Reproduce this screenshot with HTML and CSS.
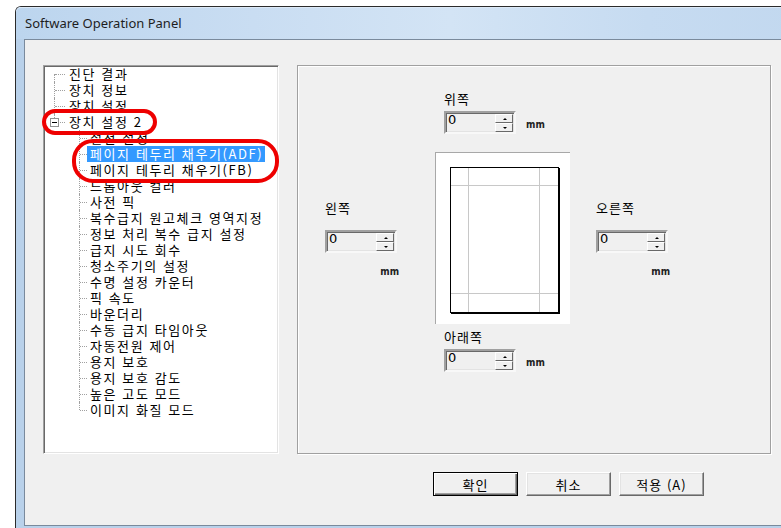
FILE: index.html
```html
<!DOCTYPE html>
<html lang="ko">
<head>
<meta charset="utf-8">
<title>Software Operation Panel</title>
<link rel="stylesheet" href="styles.css">
</head>
<body>
<div class="window">
  <div class="titlebar"><span class="title">Software Operation Panel</span></div>
  <div class="frame">
    <div class="client">
      <div class="content">
        <div class="tree">
          <ul class="rows">
            <li class="row root first"><span class="label">진단 결과</span></li>
            <li class="row root"><span class="label">장치 정보</span></li>
            <li class="row root"><span class="label">장치 설정</span></li>
            <li class="row root last"><span class="toggle"></span><span class="label">장치 설정 2</span></li>
            <li class="row child"><span class="label">절전 설정</span></li>
            <li class="row child"><span class="label selected">페이지 테두리 채우기(ADF)</span></li>
            <li class="row child"><span class="label">페이지 테두리 채우기(FB)</span></li>
            <li class="row child"><span class="label">드롭아웃 컬러</span></li>
            <li class="row child"><span class="label">사전 픽</span></li>
            <li class="row child"><span class="label">복수급지 원고체크 영역지정</span></li>
            <li class="row child"><span class="label">정보 처리 복수 급지 설정</span></li>
            <li class="row child"><span class="label">급지 시도 회수</span></li>
            <li class="row child"><span class="label">청소주기의 설정</span></li>
            <li class="row child"><span class="label">수명 설정 카운터</span></li>
            <li class="row child"><span class="label">픽 속도</span></li>
            <li class="row child"><span class="label">바운더리</span></li>
            <li class="row child"><span class="label">수동 급지 타임아웃</span></li>
            <li class="row child"><span class="label">자동전원 제어</span></li>
            <li class="row child"><span class="label">용지 보호</span></li>
            <li class="row child"><span class="label">용지 보호 감도</span></li>
            <li class="row child"><span class="label">높은 고도 모드</span></li>
            <li class="row child last"><span class="label">이미지 화질 모드</span></li>
          </ul>
          <div class="oval oval-a"></div>
          <div class="oval oval-b"></div>
        </div>

        <div class="panel">
          <div class="edge-top">
            <div class="field-label">위쪽</div>
            <div class="field-row">
              <div class="spin"><span class="spin-value">0</span><span class="spin-btns"><span class="spin-btn up"></span><span class="spin-btn down"></span></span></div>
              <span class="unit">mm</span>
            </div>
          </div>

          <div class="middle">
            <div class="side side-left">
              <div class="field-label">왼쪽</div>
              <div class="spin spin-side"><span class="spin-value">0</span><span class="spin-btns"><span class="spin-btn up"></span><span class="spin-btn down"></span></span></div>
              <div class="unit unit-below">mm</div>
            </div>
            <div class="paper">
              <div class="sheet">
                <span class="guide v g1"></span>
                <span class="guide v g2"></span>
                <span class="guide h g3"></span>
                <span class="guide h g4"></span>
              </div>
            </div>
            <div class="side side-right">
              <div class="field-label">오른쪽</div>
              <div class="spin spin-side"><span class="spin-value">0</span><span class="spin-btns"><span class="spin-btn up"></span><span class="spin-btn down"></span></span></div>
              <div class="unit unit-below">mm</div>
            </div>
          </div>

          <div class="edge-bottom">
            <div class="field-label">아래쪽</div>
            <div class="field-row">
              <div class="spin"><span class="spin-value">0</span><span class="spin-btns"><span class="spin-btn up"></span><span class="spin-btn down"></span></span></div>
              <span class="unit">mm</span>
            </div>
          </div>
        </div>
      </div>

      <div class="buttons">
        <button class="btn default">확인</button>
        <button class="btn">취소</button>
        <button class="btn">적용 (A)</button>
      </div>
    </div>
  </div>
</div>
</body>
</html>
```

FILE: styles.css
```css
html, body {
  margin: 0;
  padding: 0;
}
body {
  width: 781px;
  height: 528px;
  overflow: hidden;
  background: #ffffff;
  font-family: "Noto Sans CJK KR", "Noto Sans", sans-serif;
  color: #000;
}

.window {
  margin: 6px 0 0 15px;
  width: 790px;
  height: 540px;
  border-top: 1px solid #2b2b2b;
  border-left: 1px solid #2b2b2b;
  border-top-left-radius: 6px;
  background: #b9d1ea;
  display: flex;
  flex-direction: column;
}

.titlebar {
  height: 32px;
  flex: none;
  display: flex;
  align-items: center;
  padding-left: 9px;
  border-top-left-radius: 5px;
  background: linear-gradient(90deg, #bcd5ee 0%, #c9ddf2 30%, #d3e4f5 55%, #c6dbf1 80%, #c2d8ef 100%);
  box-shadow: inset 0 1px 0 #dce9f7;
}
.title {
  font-family: "Noto Sans", "Open Sans", sans-serif;
  font-size: 13px;
  line-height: 16px;
  color: #1e1e1e;
  margin-top: -1px;
}

.frame {
  padding-left: 8px;
  flex: none;
}

.client {
  width: 770px;
  height: 485px;
  border: 1px solid #7a8a9c;
  background: #f0f0f0;
}

.content {
  display: flex;
  padding: 25px 0 0 18px;
}

/* ---------- tree ---------- */
.tree {
  position: relative;
  width: 234px;
  height: 387px;
  border: 1px solid;
  border-color: #a0a0a0 #ffffff #ffffff #a0a0a0;
  box-shadow: inset 1px 1px 0 #696969, inset -1px -1px 0 #e3e3e3;
  background: #ffffff;
  font-size: 13px;
  letter-spacing: 1.6px;
}
.rows {
  list-style: none;
  margin: 0;
  padding: 0;
}
.row {
  position: relative;
  height: 16px;
  line-height: 16px;
  white-space: nowrap;
}
.label {
  display: inline-block;
  height: 16px;
  padding: 0 2px 0 3px;
}
.root .label {
  margin-left: 22px;
}
.child .label {
  margin-left: 43px;
}
.label.selected {
  background: #3399ff;
  color: #ffffff;
}

/* tree connector lines */
.row::before,
.row::after {
  content: "";
  position: absolute;
}
.root::before {
  left: 10px;
  top: 0;
  height: 16px;
  border-left: 1px dotted #a0a0a0;
}
.root.first::before {
  top: 8px;
  height: 8px;
}
.root.last::before {
  height: 8px;
}
.root::after {
  left: 11px;
  top: 8px;
  width: 10px;
  border-top: 1px dotted #a0a0a0;
}
.child::before {
  left: 35px;
  top: 0;
  height: 16px;
  border-left: 1px dotted #a0a0a0;
}
.child.last::before {
  height: 8px;
}
.child::after {
  left: 36px;
  top: 8px;
  width: 7px;
  border-top: 1px dotted #a0a0a0;
}
.toggle {
  position: absolute;
  z-index: 1;
  left: 6px;
  top: 4px;
  width: 7px;
  height: 7px;
  border: 1px solid #919191;
  background: #ffffff;
}
.toggle::after {
  content: "";
  position: absolute;
  left: 1px;
  top: 3px;
  width: 5px;
  height: 1px;
  background: #000000;
}

/* red annotation ovals */
.oval {
  position: absolute;
  border: 4px solid #ee0000;
  box-sizing: border-box;
}
.oval-a {
  left: -2px;
  top: 43px;
  width: 115px;
  height: 26px;
  border-radius: 13px;
}
.oval-b {
  left: 28px;
  top: 73px;
  width: 207px;
  height: 44px;
  border-radius: 21px;
}

/* ---------- right panel ---------- */
.panel {
  margin-left: 18px;
  width: 472px;
  height: 387px;
  border: 1px solid #a0a0a0;
  box-shadow: inset 1px 1px 0 #ffffff, 1px 1px 0 #ffffff;
  font-size: 13px;
  letter-spacing: 1px;
}
.field-label {
  height: 14px;
  line-height: 14px;
}
.edge-top {
  padding: 26px 0 0 146px;
}
.field-row {
  display: flex;
  align-items: flex-end;
  margin-top: 5px;
}
.spin {
  position: relative;
  width: 68px;
  height: 19px;
  border: 2px solid;
  border-color: #a0a0a0 #f8f8f8 #f8f8f8 #a0a0a0;
  box-shadow: inset 1px 1px 0 #696969, inset -1px -1px 0 #e3e3e3;
  background: #f0f0f0;
  display: flex;
  justify-content: space-between;
}
.spin-value {
  font-family: "DejaVu Sans", sans-serif;
  font-size: 13px;
  line-height: 14px;
  padding-left: 2px;
  letter-spacing: 0;
}
.spin-btns {
  display: flex;
  flex-direction: column;
  justify-content: space-between;
  width: 18px;
  padding: 1px 1px 0 0;
}
.spin-btn {
  position: relative;
  height: 8px;
  border: 1px solid;
  border-color: #ffffff #696969 #696969 #ffffff;
  background: #f0f0f0;
}
.spin-btn::after {
  content: "";
  position: absolute;
  left: 7px;
  top: 3px;
  border-left: 2px solid transparent;
  border-right: 2px solid transparent;
}
.spin-btn.up::after {
  border-bottom: 2px solid #000;
}
.spin-btn.down::after {
  border-top: 2px solid #000;
}
.unit {
  font-family: "DejaVu Sans Condensed", "DejaVu Sans", sans-serif;
  font-size: 10px;
  font-weight: bold;
  line-height: 10px;
  letter-spacing: 0;
  color: #222;
  margin-left: 10px;
  padding-bottom: 4px;
}

.middle {
  display: flex;
  margin-top: 18px;
}
.side {
  display: flex;
  flex-direction: column;
  padding-top: 49px;
}
.side-left {
  width: 110px;
  padding-left: 27px;
}
.side-right {
  padding-left: 26px;
}
.spin-side {
  margin-top: 15px;
}
.unit-below {
  width: 74px;
  text-align: right;
  margin: 14px 0 0 0;
  padding: 0;
}

.paper {
  flex: none;
  box-sizing: border-box;
  width: 135px;
  height: 172px;
  border-top: 1px solid #a8a8a8;
  border-left: 1px solid #a8a8a8;
  background: #ffffff;
  padding: 14px 0 0 14px;
}
.sheet {
  position: relative;
  width: 107px;
  height: 144px;
  border: 1px solid #000;
  box-shadow: 1px 1px 0 #000;
}
.guide {
  position: absolute;
  background: #c8c8c8;
}
.guide.v {
  top: 0;
  bottom: 0;
  width: 1px;
}
.guide.h {
  left: 0;
  right: 0;
  height: 1px;
}
.g1 { left: 17px; }
.g2 { left: 88px; }
.g3 { top: 17px; }
.g4 { top: 125px; }

.edge-bottom {
  padding: 6px 0 0 146px;
}

/* ---------- buttons ---------- */
.buttons {
  display: flex;
  gap: 8px;
  padding: 18px 0 0 408px;
}
.btn {
  width: 85px;
  height: 24px;
  margin: 0;
  padding: 0;
  font-family: "Noto Sans CJK KR", sans-serif;
  font-size: 13px;
  letter-spacing: 1px;
  color: #000;
  background: #f0f0f0;
  border: 1px solid;
  border-color: #ffffff #696969 #696969 #ffffff;
  box-shadow: inset -1px -1px 0 #a0a0a0, inset 1px 1px 0 #e3e3e3;
}
.btn.default {
  border: 1px solid #000;
  box-shadow: inset 1px 1px 0 #ffffff, inset -1px -1px 0 #696969, inset -2px -2px 0 #a0a0a0;
}
```
